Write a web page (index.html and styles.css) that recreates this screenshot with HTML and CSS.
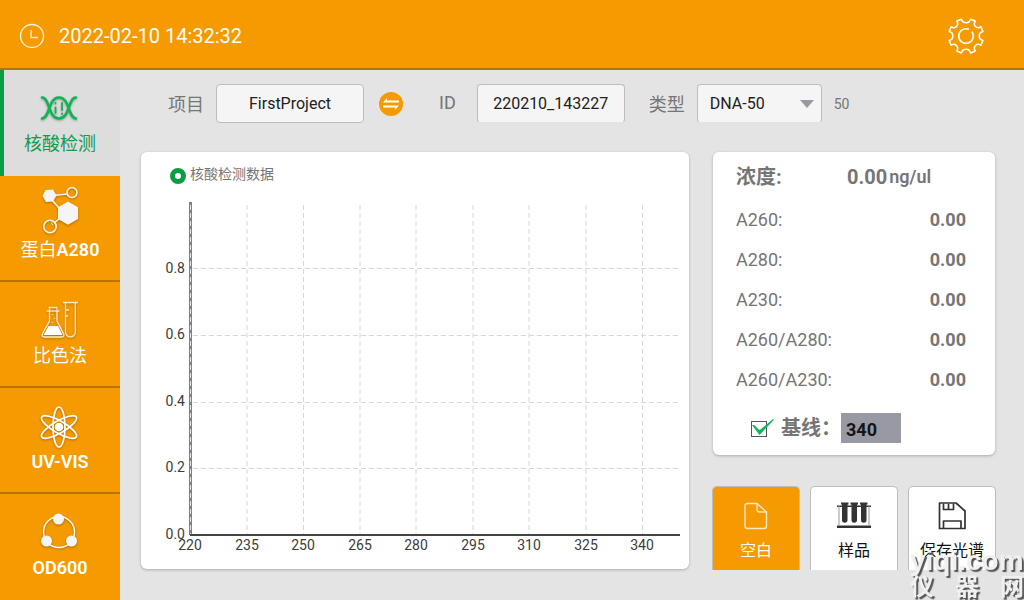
FILE: index.html
```html
<!DOCTYPE html>
<html lang="zh-CN">
<head>
    <meta charset="UTF-8">
    <meta name="viewport" content="width=device-width, initial-scale=1.0">
    <title>核酸检测</title>
    <link rel="stylesheet" href="styles.css">
</head>
<body>
    <header class="topbar">
        <svg class="clock" width="26" height="26" viewBox="0 0 26 26" fill="none" stroke="#fff">
            <circle cx="13" cy="13" r="11.5" stroke-width="1.3" opacity="0.9"/>
            <path d="M12 7v7.500H19" stroke-width="1.500" opacity="0.750"/>
        </svg>
        <time class="time" datetime="2022-02-10T14:32:32">2022-02-10 14:32:32</time>
        <button class="settings" type="button" aria-label="设置">
            <svg width="38" height="38" viewBox="0 0 38 38" fill="none" stroke="#fff" stroke-width="1.6" stroke-linecap="round" stroke-linejoin="round">
                <path d="M14.5 2.2 C15.5 7 22.5 7 23.5 2.2 L28.2 4.1 C25.6 8.3 29.7 12.4 33.9 9.8 L35.9 14.5 C31.1 15.5 31.1 22.5 35.9 23.5 L33.9 28.2 C29.7 25.6 25.6 29.7 28.2 33.9 L23.5 35.9 C22.5 31.1 15.5 31.1 14.5 35.9 L9.8 33.9 C12.4 29.7 8.3 25.6 4.1 28.2 L2.2 23.5 C7 22.5 7 15.5 2.2 14.5 L4.1 9.8 C8.3 12.4 12.4 8.3 9.8 4.1 Z"/>
                <path d="M25.2 15.2 A7.3 7.3 0 1 1 21.2 12.1"/>
            </svg>
        </button>
    </header>

    <div class="layout">
        <nav class="navbar">
            <a class="active" href="#dna">
                <svg width="40" height="28" viewBox="0 0 40 28" fill="none" stroke="#0fb454" stroke-width="2.6" stroke-linecap="round">
                    <path d="M3 3.5C11 3.5 9 24.5 20 24.5S29 3.5 37 3.5"/>
                    <path d="M3 24.5C11 24.5 9 3.5 20 3.5S29 24.5 37 24.5"/>
                    <path d="M16.500 9v.5M16.500 13.500v5.500M23 9v7M23 19.500v.5" stroke-width="1.800"/>
                </svg>
                <span>核酸检测</span>
            </a>
            <a href="#a280">
                <svg width="40" height="50" viewBox="0 0 40 50" fill="none" stroke="#f5f5f5" stroke-width="1.6">
                    <path d="M14 9.500l14-1.500M13 14l7 8M20 33l-5 4"/>
                    <circle cx="33" cy="6.500" r="5"/>
                    <circle cx="11" cy="40.500" r="6.200"/>
                    <path d="M12 36.500a4 4 0 0 1 2 3" stroke-width="1"/>
                    <path d="M6.500 4l7.500-.5 3.500 6-3.500 6-7 .5-3.500-6z" fill="#f5f5f5" stroke="none"/>
                    <path d="M29 15.500l10 5.800v11.600l-10 5.800-10-5.800V21.300z" fill="#f5f5f5" stroke="none"/>
                </svg>
                <span>蛋白<b>A280</b></span>
            </a>
            <a href="#colorimetry">
                <svg width="40" height="42" viewBox="0 0 40 42" fill="none" stroke="#fff" stroke-width="1.3">
                    <path d="M9.500 7.500h9M7.500 11h13M10.500 8v3M18 8v3" opacity="0.700"/>
                    <path d="M10.500 11v10L3.300 34q-.8 3 2 3h17.400q2.800 0 2-3L18 21V11" opacity="0.850"/>
                    <path d="M9.500 26h9.500l4.500 9h-19z" fill="#fff" stroke="none"/>
                    <path d="M13.500 14v1M15.500 18v1M13 22v1" opacity="0.600"/>
                    <path d="M24 2.500h15M26.500 3v29a4.900 4.900 0 0 0 9.800 0V3M27 10h3M27 16h2" opacity="0.800"/>
                </svg>
                <span>比色法</span>
            </a>
            <a href="#uvvis">
                <svg width="40" height="42" viewBox="0 1 40 42" fill="none" stroke="#fff" stroke-width="1.7">
                    <ellipse cx="20" cy="22" rx="6" ry="20"/>
                    <ellipse cx="20" cy="22" rx="6" ry="20" transform="rotate(60 20 22)"/>
                    <ellipse cx="20" cy="22" rx="6" ry="20" transform="rotate(-60 20 22)"/>
                    <circle cx="20" cy="22" r="4.300" fill="#fff" stroke="none"/>
                </svg>
                <b>UV-VIS</b>
            </a>
            <a href="#od600">
                <svg width="40" height="42" viewBox="0 0 40 42" fill="none" stroke="#fff" stroke-width="1.4">
                    <circle cx="20" cy="20" r="15.500"/>
                    <g fill="#f5f5f5" stroke="none">
                        <circle cx="19.500" cy="7" r="5.500"/>
                        <circle cx="7.500" cy="29" r="5.500"/>
                        <circle cx="32.500" cy="29" r="5.500"/>
                    </g>
                </svg>
                <b>OD600</b>
            </a>
        </nav>

        <main class="main-content">
            <form class="toolbar">
                <label for="project">项目</label>
                <input class="field project" id="project" type="text" value="FirstProject">
                <button class="switch" type="button" aria-label="切换项目">
                    <svg width="24" height="24" viewBox="0 0 24 24">
                        <circle cx="12" cy="12" r="12" fill="#f59a00"/>
                        <path d="M4 10.500L8 6v2.500h12v2zM20 13.500L16 18v-2.500H4v-2z" fill="#fff"/>
                    </svg>
                </button>
                <label for="sample-id">ID</label>
                <input class="field" id="sample-id" type="text" value="220210_143227">
                <label for="type">类型</label>
                <div class="select-box">
                    <select class="field" id="type">
                        <option>DNA-50</option>
                    </select>
                </div>
                <span class="factor">50</span>
            </form>

            <div class="panels">
                <section class="card chart-card">
                    <div class="legend"><i class="dot"></i>核酸检测数据</div>
                    <svg class="chart" viewBox="0 0 548 370">
                        <g class="grid">
                            <path d="M106 15V344M162.500 15V344M219 15V344M275 15V344M332 15V344M388 15V344M445 15V344M501.500 15V344"/>
                            <path d="M52 78.500H539M52 145.500H539M52 212.500H539M52 278.500H539"/>
                        </g>
                        <path class="axis-y" d="M49.500 12V345"/>
                        <path class="axis-y-dash" d="M49.500 15V344"/>
                        <path class="axis-x" d="M49 345H539"/>
                        <g class="y-labels">
                            <text x="44" y="83">0.8</text>
                            <text x="44" y="149">0.6</text>
                            <text x="44" y="216">0.4</text>
                            <text x="44" y="282">0.2</text>
                            <text x="44" y="349">0.0</text>
                        </g>
                        <g class="x-labels">
                            <text x="49" y="360">220</text>
                            <text x="106" y="360">235</text>
                            <text x="162" y="360">250</text>
                            <text x="219" y="360">265</text>
                            <text x="275" y="360">280</text>
                            <text x="332" y="360">295</text>
                            <text x="388" y="360">310</text>
                            <text x="445" y="360">325</text>
                            <text x="501" y="360">340</text>
                        </g>
                    </svg>
                </section>

                <div class="side">
                    <section class="card results">
                        <div class="concentration">
                            <h2>浓度:</h2>
                            <p><b>0.00</b> <span>ng/ul</span></p>
                        </div>
                        <table>
                            <tr><th scope="row">A260:</th><td>0.00</td></tr>
                            <tr><th scope="row">A280:</th><td>0.00</td></tr>
                            <tr><th scope="row">A230:</th><td>0.00</td></tr>
                            <tr><th scope="row">A260/A280:</th><td>0.00</td></tr>
                            <tr><th scope="row">A260/A230:</th><td>0.00</td></tr>
                        </table>
                        <div class="baseline">
                            <input type="checkbox" id="use-baseline" checked>
                            <label for="use-baseline">基线：</label>
                            <input type="text" id="baseline" value="340" aria-label="基线波长">
                        </div>
                    </section>

                    <div class="actions">
                        <button class="primary" type="button">
                            <svg width="36" height="30" viewBox="0 0 36 30" fill="none" stroke="#ffe6bf" stroke-width="1.4" stroke-linejoin="round">
                                <path d="M9.500 2.500H19l9.500 8.500V25q0 2.500-2.500 2.500H9.500Q7 27.500 7 25V5q0-2.500 2.500-2.500z"/>
                                <path d="M19 2.500v6q0 2.500 2.500 2.500h7"/>
                            </svg>
                            空白
                        </button>
                        <button type="button">
                            <svg width="36" height="30" viewBox="0 0 36 30" fill="#333">
                                <path d="M1 4.500h34v1.500H1zM1 24.500h34v2.500H1z"/>
                                <path d="M2.500 5h1v20h-1zM32.500 5h1v20h-1z" fill="#999"/>
                                <path d="M5 1.500h7.500v2H5zM14.500 1.500h7.500v2h-7.500zM24 1.500h7.500v2H24z"/>
                                <path d="M6 3h5.500v16a2.700 2.700 0 0 1-5.500 0zM15.500 3H21v16a2.700 2.700 0 0 1-5.500 0zM25 3h5.500v16a2.700 2.700 0 0 1-5.500 0z"/>
                            </svg>
                            样品
                        </button>
                        <button type="button">
                            <svg width="36" height="30" viewBox="0 0 36 30" fill="none" stroke="#333" stroke-width="1.7" stroke-linejoin="round">
                                <path d="M5.500 2H22l9 8v17.500H5.500z"/>
                                <path d="M9.500 2.500v6h10v-6M14.500 3v5M9.500 27v-7h17.500v7"/>
                            </svg>
                            保存光谱
                        </button>
                    </div>
                </div>
            </div>
        </main>
    </div>

    <div class="watermark">
        <div>yiqi.com</div>
        <div class="watermark-cn"><span>仪</span><span>器</span><span>网</span></div>
    </div>
</body>
</html>
```
FILE: styles.css
```css
/* General Styles */
* {
    box-sizing: border-box;
}

body {
    margin: 0;
    min-height: 100vh;
    display: flex;
    flex-direction: column;
    font-family: Roboto, "Noto Sans CJK SC", sans-serif;
    background-color: #e4e4e4;
    color: #757575;
}

h2, p {
    margin: 0;
}

button, input, select {
    font-family: inherit;
}

button {
    padding: 0;
    border: none;
    background: none;
}

svg {
    display: block;
}

/* Top Bar */
.topbar {
    display: flex;
    align-items: center;
    height: 70px;
    padding: 3px 39px 0 19px;
    background-color: #f59a00;
    border-bottom: 2px solid #b87300;
    color: white;
}

.time {
    margin-left: 14px;
    font-size: 20px;
    line-height: 24px;
}

.settings {
    margin-left: auto;
}

.layout {
    flex: 1;
    display: flex;
}

/* Navbar Styles */
.navbar {
    width: 120px;
    flex: none;
    background-color: #f59a00;
}

.navbar a {
    display: flex;
    flex-direction: column;
    align-items: center;
    justify-content: flex-end;
    height: 106px;
    padding: 0 2px 16px 2px;
    border-bottom: 2px solid #b87300;
    color: white;
    font-size: 18px;
    line-height: 28px;
    text-decoration: none;
}

.navbar a:last-child {
    border-bottom-color: #f59a00;
}

.navbar b {
    font-weight: 600;
}

.navbar svg {
    margin-right: 2px;
    filter: drop-shadow(0 1px 1px rgba(0, 0, 0, 0.3));
}

.navbar a.active {
    padding: 0 4px 18px 4px;
    background-color: #dddddd;
    border-bottom: none;
    box-shadow: inset 4px 0 #0a9e44;
    color: #149a48;
}

.navbar a.active svg {
    margin-bottom: 8px;
}

/* Main Content Styles */
.main-content {
    flex: 1;
    min-width: 0;
    padding: 14px 28px 29px 21px;
}

.toolbar {
    display: flex;
    align-items: center;
    height: 39px;
    padding-left: 27px;
    font-size: 18px;
}

.toolbar label {
    padding-bottom: 2px;
}

.field {
    width: 148px;
    height: 39px;
    padding: 0 12px;
    border: 1px solid #bdbdbd;
    border-bottom-color: #e4e4e4;
    border-radius: 4px;
    background-color: #f5f5f5;
    color: #212121;
    font-size: 16px;
    text-align: center;
}

.project {
    border-bottom-color: #bdbdbd;
}

.toolbar label + .field,
.select-box {
    margin-left: 12px;
}

.switch {
    margin: 0 36px 0 15px;
}

#sample-id {
    margin: 0 24px 0 21px;
}

.select-box {
    position: relative;
    width: 125px;
}

.select-box .field {
    width: 100%;
    appearance: none;
    text-align: left;
}

.select-box::after {
    content: "";
    position: absolute;
    right: 8px;
    top: 16px;
    border: 7px solid transparent;
    border-top: 8px solid #9999a3;
    border-bottom: none;
    pointer-events: none;
}

.factor {
    margin-left: 12px;
    font-size: 14px;
}

.panels {
    display: grid;
    grid-template-columns: 1fr 284px;
    gap: 23px;
    align-items: start;
    margin-top: 29px;
}

.card {
    background-color: white;
    border-radius: 6px;
    box-shadow: 0 1px 3px rgba(0, 0, 0, 0.25);
}

/* Chart */
.chart-card {
    padding: 12px 0 9px;
}

.legend {
    display: flex;
    align-items: center;
    height: 20px;
    margin-bottom: 6px;
    padding-left: 29px;
    font-size: 14px;
    line-height: 20px;
}

.dot {
    width: 16px;
    height: 16px;
    margin: 4px 4px 0 0;
    border: 5px solid #0a9e44;
    border-radius: 50%;
}

.chart {
    width: 100%;
    height: auto;
}

.chart path {
    fill: none;
}

.grid path {
    stroke: #d5d8df;
    stroke-dasharray: 5 3;
}

.axis-y {
    stroke: #808080;
    stroke-width: 3;
}

.axis-y-dash {
    stroke: #dfe2e8;
    stroke-dasharray: 5 3;
}

.axis-x {
    stroke: #444444;
    stroke-width: 2;
}

.chart text {
    fill: #3c3c3c;
    font-size: 14px;
}

.y-labels {
    text-anchor: end;
}

.x-labels {
    text-anchor: middle;
}

/* Results */
.results {
    margin: 0 1px;
    padding: 9px 29px 12px 23px;
}

.concentration {
    display: flex;
    height: 32px;
    margin-bottom: 6px;
    line-height: 32px;
}

.concentration h2 {
    width: 111px;
    font-size: 20px;
    font-weight: 700;
}

.concentration p {
    font-size: 18px;
    font-weight: 600;
    white-space: nowrap;
    display: flex;
    gap: 2px;
}

.concentration b {
    font-size: 20px;
    font-weight: 700;
}

.results table {
    width: 100%;
    border-collapse: collapse;
}

.results th,
.results td {
    height: 40px;
    padding: 0;
    font-size: 18px;
}

.results th {
    font-weight: 400;
    text-align: left;
}

.results td {
    font-weight: 700;
    text-align: right;
}

.baseline {
    display: flex;
    align-items: center;
    margin-top: 14px;
    padding-left: 15px;
    font-size: 20px;
    font-weight: 700;
    line-height: 30px;
}

.baseline input[type="checkbox"] {
    position: relative;
    appearance: none;
    width: 16px;
    height: 16px;
    margin: 2px 14px 0 0;
    border: 1px solid #55556a;
}

.baseline input[type="checkbox"]:checked::after {
    content: "";
    position: absolute;
    left: 0;
    top: -3px;
    width: 22px;
    height: 16px;
    background-color: #0fb454;
    clip-path: polygon(0 38%, 10% 38%, 34% 70%, 96% 0, 100% 4%, 34% 100%);
}

.baseline input[type="text"] {
    width: 60px;
    height: 30px;
    padding: 2px 5px 0;
    border: none;
    background-color: #9999a3;
    color: #151515;
    font-size: 18px;
    font-weight: 700;
}

/* Action Buttons */
.actions {
    display: grid;
    grid-template-columns: repeat(3, 1fr);
    gap: 10px;
    margin-top: 31px;
}

.actions button {
    display: flex;
    flex-direction: column;
    align-items: center;
    height: 84px;
    padding-top: 14px;
    border: 1px solid #bdbdbd;
    border-bottom: none;
    border-radius: 5px 5px 0 0;
    background-color: white;
    color: #111111;
    font-size: 16px;
    line-height: 24px;
}

.actions svg {
    margin-bottom: 8px;
}

.actions .primary {
    background-color: #f59a00;
    color: white;
}

/* Watermark */
.watermark {
    position: fixed;
    right: 0;
    bottom: 0;
    width: 114px;
    height: 52px;
    color: #f0f0f0;
    font-family: "Liberation Sans", "Noto Sans CJK SC", sans-serif;
    font-size: 28px;
    font-weight: 700;
    line-height: 26px;
    text-shadow: 2px 2px 1px #555555;
    pointer-events: none;
}

.watermark-cn {
    display: flex;
    justify-content: space-between;
    font-size: 24px;
}
```
